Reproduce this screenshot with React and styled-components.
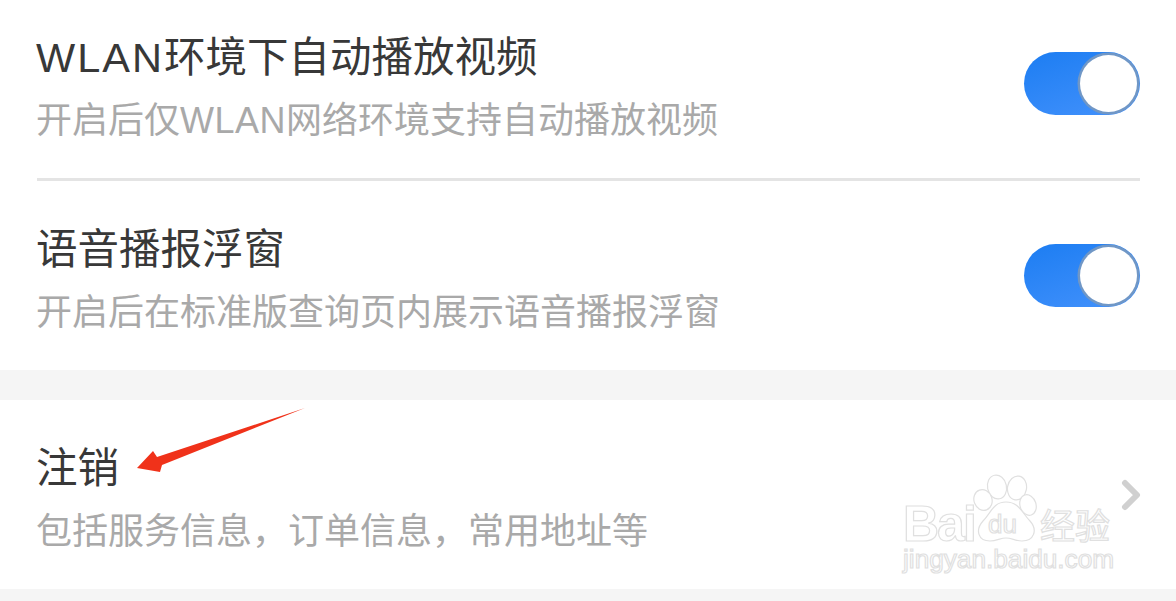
import React from "react";
import styled, { createGlobalStyle } from "styled-components";

const GlobalStyle = createGlobalStyle`
  html, body {
    margin: 0;
    padding: 0;
    background: #ffffff;
  }
  body {
    font-family: "Noto Sans CJK SC", "Noto Sans", sans-serif;
  }
`;

const Page = styled.div`
  position: relative;
  width: 1176px;
  height: 601px;
  overflow: hidden;
  background: #f5f5f5;
`;

const Group = styled.section`
  background: #ffffff;
  padding: 0 36px 0 37px;
`;

const Row = styled.div`
  display: flex;
  align-items: center;
  justify-content: space-between;
  box-sizing: border-box;
  height: ${(p) => p.$height}px;
  padding-top: ${(p) => p.$top || 0}px;
  padding-bottom: ${(p) => p.$bottom || 0}px;
`;

const Divider = styled.div`
  height: 3px;
  background: #e4e4e4;
`;

const Gap = styled.div`
  height: 30px;
`;

const Texts = styled.div`
  display: flex;
  flex-direction: column;
  gap: 15px;
  margin-left: -1px;
`;

const Title = styled.div`
  font-size: 41.5px;
  line-height: 48px;
  color: #383838;
  white-space: nowrap;
`;

const Sub = styled.div`
  font-size: 36px;
  line-height: 48px;
  color: #a9a9a9;
  white-space: nowrap;
`;

const Latin = styled.span`
  font-family: "Liberation Sans", sans-serif;
  line-height: 1;
  letter-spacing: ${(p) => p.$spacing || 0}px;
`;

const Toggle = styled.div`
  position: relative;
  width: 116px;
  height: 63px;
  margin-bottom: 4px;
  border-radius: 32px;
  background: linear-gradient(160deg, #1c7df2, #4492fc);
`;

const Knob = styled.div`
  position: absolute;
  top: 3px;
  right: 3px;
  width: 57px;
  height: 57px;
  border-radius: 50%;
  background: #ffffff;
  box-shadow: 0 0 0 2.5px #7097c6;
`;

const Chevron = styled.svg`
  width: 22px;
  height: 34px;
  margin-right: -3px;
  margin-top: -3px;
`;

const ArrowMark = styled.svg`
  position: absolute;
  left: 130px;
  top: 400px;
  width: 180px;
  height: 80px;
`;

const Watermark = styled.svg`
  position: absolute;
  left: 895px;
  top: 465px;
  width: 230px;
  height: 120px;
  font-family: "Liberation Sans", "Noto Sans CJK SC", sans-serif;
`;

const Outline = styled.text`
  fill: #ffffff;
  stroke: #e0e0e0;
  stroke-width: 1.2px;
  font-size: ${(p) => p.$size}px;
  font-weight: ${(p) => p.$weight || 400};
  letter-spacing: ${(p) => p.$spacing || 0}px;
`;

function Switch() {
  return (
    <Toggle>
      <Knob />
    </Toggle>
  );
}

export default function App() {
  return (
    <Page>
      <GlobalStyle />
      <Group>
        <Row $height={178} $bottom={7}>
          <Texts>
            <Title><Latin $spacing={2}>WLAN</Latin>环境下自动播放视频</Title>
            <Sub>开启后仅<Latin $spacing={0.5}>WLAN</Latin>网络环境支持自动播放视频</Sub>
          </Texts>
          <Switch />
        </Row>
        <Divider />
        <Row $height={189} $top={3}>
          <Texts>
            <Title>语音播报浮窗</Title>
            <Sub>开启后在标准版查询页内展示语音播报浮窗</Sub>
          </Texts>
          <Switch />
        </Row>
      </Group>
      <Gap />
      <Group>
        <Row $height={189} $top={3}>
          <Texts>
            <Title>注销</Title>
            <Sub>包括服务信息，订单信息，常用地址等</Sub>
          </Texts>
          <Chevron viewBox="0 0 22 34">
            <path d="M4 5 L16 17 L4 29" fill="none" stroke="#d0d0d0" strokeWidth="6" strokeLinecap="round" strokeLinejoin="round" />
          </Chevron>
        </Row>
      </Group>
      <Watermark viewBox="0 0 230 120">
        <g fill="#ffffff" stroke="#e0e0e0" strokeWidth="1.2">
          <ellipse cx="102" cy="22" rx="9.5" ry="12" transform="rotate(-12 102 22)" />
          <ellipse cx="122" cy="23" rx="9.5" ry="12" transform="rotate(10 122 23)" />
          <ellipse cx="88" cy="35" rx="9" ry="10.5" transform="rotate(-20 88 35)" />
          <ellipse cx="133" cy="40" rx="8" ry="10.5" transform="rotate(-18 133 40)" />
          <path d="M111 37 C124 37 127 48 135 56 C143 65 139 76 127 76 C120 76 117 73 111 73 C105 73 102 76 95 76 C83 76 80 65 88 56 C96 48 98 37 111 37 Z" />
        </g>
        <Outline x="8" y="76" $size={50} $weight={700} $spacing={-2}>Bai</Outline>
        <Outline x="93" y="68" $size={26}>du</Outline>
        <Outline x="145" y="74" $size={35}>经验</Outline>
        <Outline x="8" y="103" $size={26.2}>jingyan.baidu.com</Outline>
      </Watermark>
      <ArrowMark viewBox="130 400 180 80">
        <polygon points="137,468 153,451 157,457 305,408 162,465 160,472" fill="#f0321a" />
      </ArrowMark>
    </Page>
  );
}
